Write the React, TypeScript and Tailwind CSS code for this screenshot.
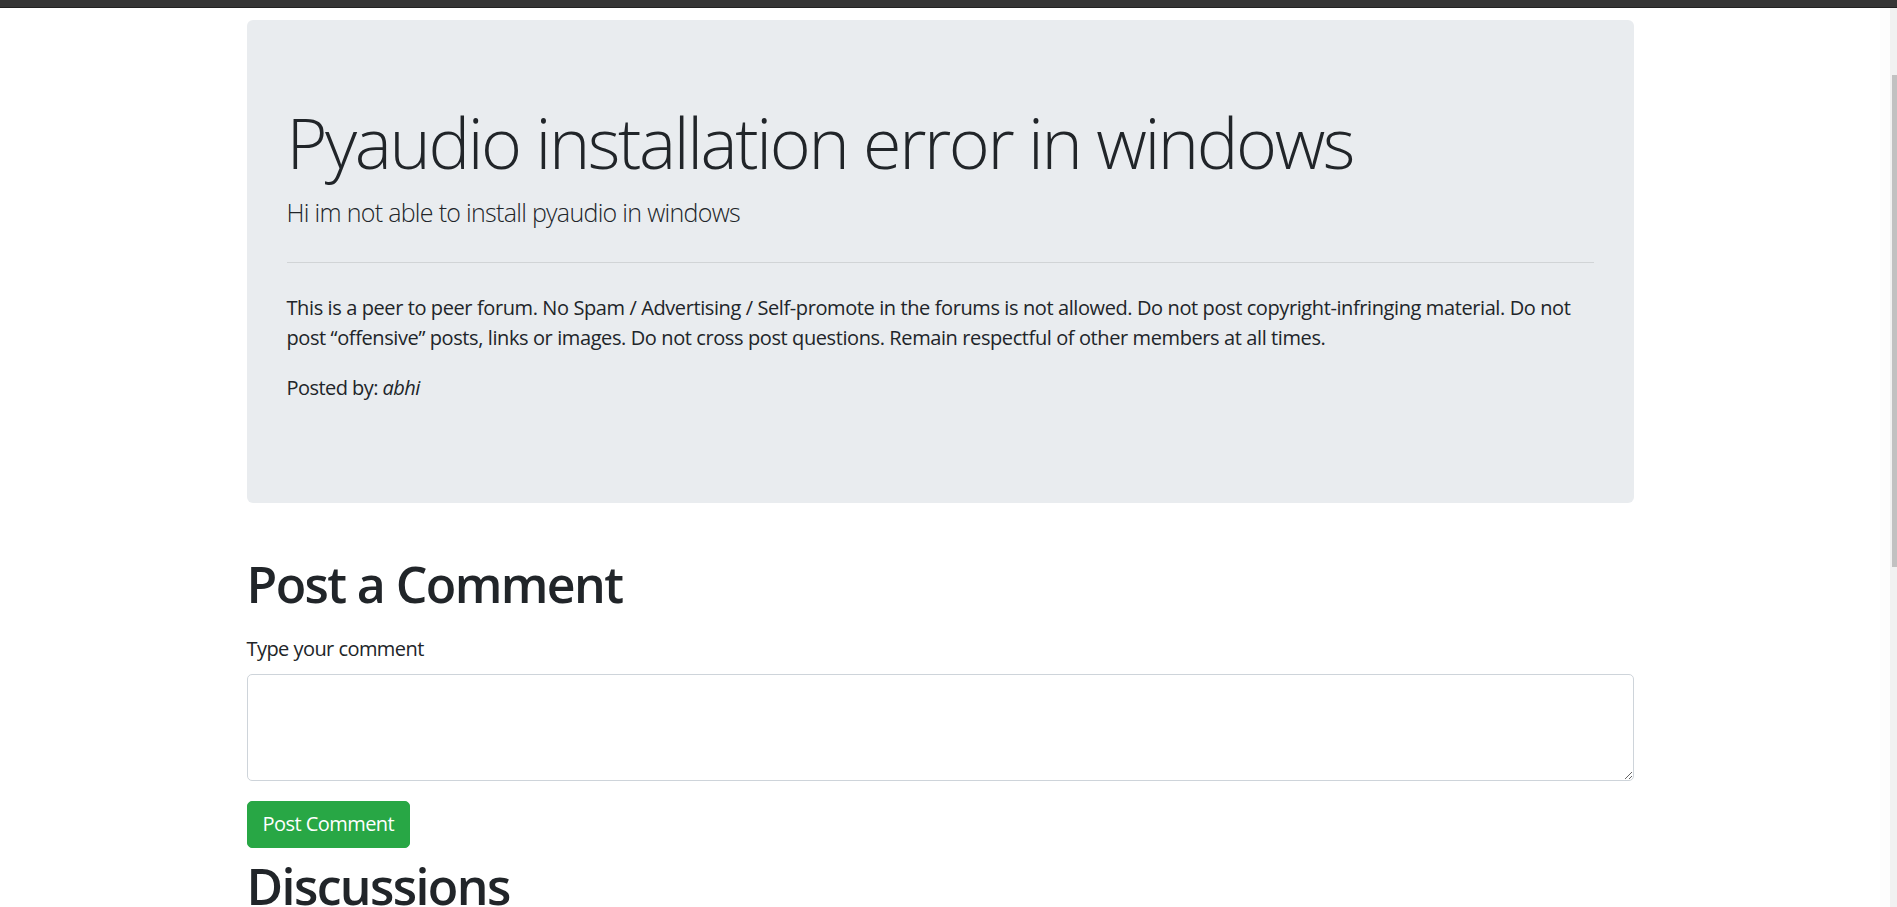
export default function App() {
  return (
    <div className="flex h-[907px] flex-col overflow-hidden bg-white font-['Open_Sans',sans-serif] text-[#212529]">
      <div className="h-2 shrink-0 border-b border-[#222] bg-[#363636]" />
      <div className="flex min-h-0 flex-1">
        <main className="w-[1880px] shrink-0 overflow-hidden">
          <div className="mx-auto w-[1387px] pt-[12px]">
            <div className="mb-[51px] rounded-[6px] bg-[#e9ecef] px-10 py-20">
              <h1 className="mb-[10px] text-[70px] font-light leading-[84px] tracking-[-2.4px]">
                Pyaudio installation error in windows
              </h1>
              <p className="text-[25px] font-light leading-[37.5px] tracking-[-0.7px]">
                Hi im not able to install pyaudio in windows
              </p>
              <hr className="my-[30px] border-t border-black/10" />
              <p className="mb-5 text-[20px] leading-[30px] tracking-[-0.4px]">
                This is a peer to peer forum. No Spam / Advertising / Self-promote in the forums is not allowed.
                Do not post copyright-infringing material. Do not post “offensive” posts, links or images. Do not
                cross post questions. Remain respectful of other members at all times.
              </p>
              <p className="mb-5 text-[20px] leading-[30px] tracking-[-0.55px]">
                Posted by: <em>abhi</em>
              </p>
            </div>

            <h1 className="mb-[20px] text-[50px] font-semibold leading-[60px] tracking-[-1.6px]">
              Post a Comment
            </h1>
            <form>
              <div className="mb-5">
                <label htmlFor="comment" className="mb-[10px] block text-[20px] leading-[30px] tracking-[-0.55px]">
                  Type your comment
                </label>
                <textarea
                  id="comment"
                  rows={3}
                  className="block w-full rounded-[5px] border border-[#ced4da] bg-white px-[15px] py-[7.5px] text-[20px] leading-[30px] outline-none"
                />
              </div>
              <button
                type="button"
                className="rounded-[5px] border border-[#28a745] bg-[#28a745] px-[15px] py-[7.5px] text-[20px] leading-[30px] tracking-[-0.55px] text-white"
              >
                Post Comment
              </button>
            </form>
            <h1 className="mt-[8px] text-[50px] font-semibold leading-[60px] tracking-[-1.6px]">Discussions</h1>
          </div>
        </main>
        <div className="w-[10px] shrink-0 bg-[#fdfdfd]" />
        <div className="flex w-[7px] shrink-0 flex-col bg-[#f1f1f1]">
          <div className="h-[67px] shrink-0" />
          <div className="ml-[2px] h-[492px] bg-[#c1c1c1]" />
        </div>
      </div>
    </div>
  );
}
